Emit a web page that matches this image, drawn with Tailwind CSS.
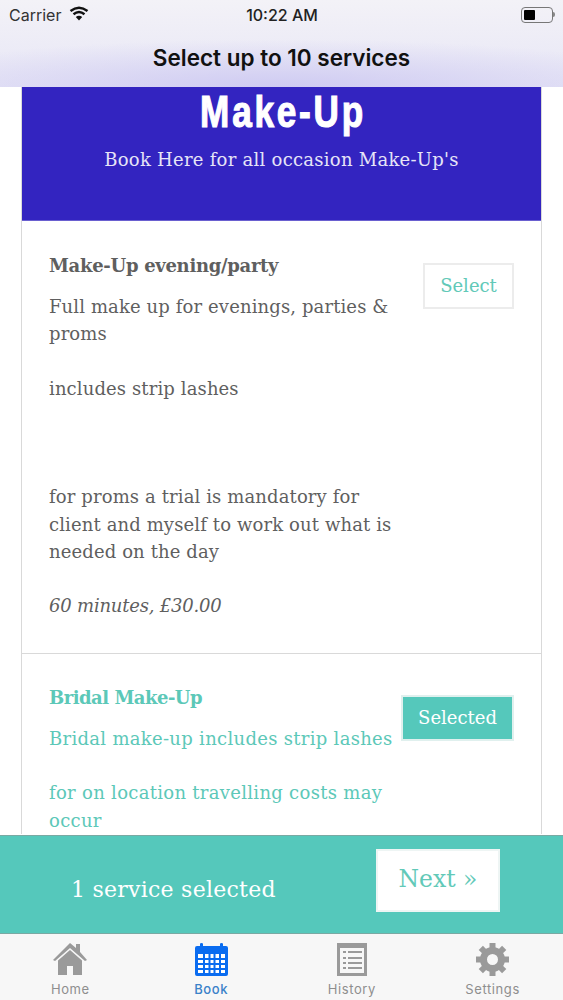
<!DOCTYPE html>
<html lang="en">

<head>
  <meta charset="UTF-8" />
  <meta name="viewport" content="width=device-width, initial-scale=1.0" />
  <title>Select services</title>
  <script src="https://cdn.jsdelivr.net/npm/@tailwindcss/browser@4"></script>
</head>

<body class="bg-white">
  <div class="flex flex-col h-[1000px] w-[563px] overflow-hidden font-['DejaVu_Serif',serif]">

    <!-- status bar + nav -->
    <header class="h-[87px] shrink-0 bg-[radial-gradient(ellipse_75%_55%_at_50%_100%,#cfcbf2,transparent),linear-gradient(#f3f2f7,#e7e6f6)] font-['Inter',sans-serif] text-[#111]">
      <div class="flex items-center justify-between h-[29px] pl-[9px] pr-[8px]">
        <div class="flex items-center w-[180px] gap-[8px]">
          <span class="text-[16px] text-[#333]">Carrier</span>
          <svg class="w-[20px] h-[15px] mb-[3px]" viewBox="0 0 20 15" fill="none" stroke="#111" stroke-width="2.4">
            <path d="M1.5 5 Q10 -1.5 18.5 5" />
            <path d="M4.5 8.2 Q10 3.8 15.5 8.2" />
            <path d="M10 14.5 L6.8 11 Q10 8.6 13.2 11 Z" fill="#111" stroke="none" />
          </svg>
        </div>
        <span class="text-[16px] font-medium text-[#222]">10:22 AM</span>
        <div class="flex justify-end items-center w-[180px]">
          <div class="w-[32px] h-[16px] rounded-[4px] border border-[#777] p-[2px]">
            <div class="w-[11px] h-full bg-black rounded-[1px]"></div>
          </div>
          <div class="w-[2px] h-[5px] bg-[#888] rounded-r-sm"></div>
        </div>
      </div>
      <h1 class="text-center text-[22.5px] leading-[58px] font-semibold h-[58px]">Select up to 10 services</h1>
    </header>

    <!-- service list -->
    <main class="flex-1 min-h-0 overflow-hidden px-[21px]">
      <div class="border-x border-[#d9d9d9]">
        <div class="h-[134px] bg-[#3324c0] text-center text-white border-b border-[#6a60d0]">
          <h2 class="font-['Liberation_Sans',sans-serif] font-bold text-[45px] leading-[50px] tracking-[3.6px] pl-[4px] scale-x-[0.78] [-webkit-text-stroke:1.2px_white]">Make-Up</h2>
          <p class="text-[18px] leading-[27px] mt-[9px] tracking-[0.26px] text-[#e6e4f7]">Book Here for all occasion Make-Up's</p>
        </div>

        <div class="flex justify-between pl-[27px] pr-[27px] pt-[31px] h-[433px] border-b border-[#d9d9d9] text-[#5f5f5f]">
          <div class="w-[350px] text-[18px] leading-[27.2px]">
            <h3 class="font-bold mb-[14px] leading-[27px] tracking-[-0.3px]">Make-Up evening/party</h3>
            <p class="tracking-[0.12px]">Full make up for evenings, parties &amp; proms<br /><br />includes strip lashes<br /><br /><br /><br />for proms a trial is mandatory for client and myself to work out what is needed on the day<br /><br /><em class="tracking-[-0.2px]">60 minutes, £30.00</em></p>
          </div>
          <button class="mt-[11px] w-[91px] h-[46px] pb-[2px] border-2 border-[#ececec] text-[#62c9b8] text-[18px]">Select</button>
        </div>

        <div class="flex justify-between pl-[27px] pr-[27px] pt-[30px] text-[#5cc8b8]">
          <div class="w-[350px] text-[18px] leading-[27.2px]">
            <h3 class="font-bold mb-[14px] leading-[27px] tracking-[-0.5px]">Bridal Make-Up</h3>
            <p class="tracking-[0.3px]">Bridal make-up includes strip lashes<br /><br />for on location travelling costs may occur</p>
          </div>
          <button class="mt-[11px] w-[113px] h-[46px] pb-[2px] border-2 border-[#e0f0ee] bg-[#55c8bb] text-white text-[18px]">Selected</button>
        </div>
      </div>
    </main>

    <!-- selected summary -->
    <div class="h-[99px] shrink-0 flex items-center justify-between bg-[#55c8bb] border-y border-[#7aa9a3] pl-[71px] pr-[63px]">
      <span class="text-white text-[22px] mt-[10px] tracking-[0.25px]">1 service selected</span>
      <button class="w-[124px] h-[63px] pb-[2px] bg-white border-2 border-[#eef5f4] text-[#62c9b8] text-[23.5px] mb-[8px]">Next »</button>
    </div>

    <!-- tab bar -->
    <nav class="h-[66px] shrink-0 grid grid-cols-4 bg-[#f7f7f7] font-['Inter',sans-serif] text-[13px] tracking-[0.6px] text-[#8e8e8e] text-center">
      <div class="flex flex-col items-center pt-[9px]">
        <svg class="w-[34px] h-[33px]" viewBox="0 0 34 33" fill="#9a9a9a">
          <path d="M17 0 L23 5 V1 H27 V9 L34 17 L32 18 L17 5 L2 18 L0 17 Z" />
          <path d="M17 7 L29 17.5 V32 H20 V23 H14 V32 H5 V17.5 Z" />
        </svg>
        <span class="mt-[4px]">Home</span>
      </div>
      <div class="flex flex-col items-center pt-[9px] text-[#3b82c9] font-medium">
        <svg class="w-[33px] h-[33px]" viewBox="0 0 33 33">
          <path fill="#0a6cf0" d="M2 3 H5 V1 Q5 0 6.5 0 T8 1 V3 H25 V1 Q25 0 26.5 0 T28 1 V3 H31 Q33 3 33 5 V31 Q33 33 31 33 H2 Q0 33 0 31 V5 Q0 3 2 3 Z" />
          <path fill="#fff" d="M3 11 H30 V30 H3 Z" />
          <path fill="#0a6cf0" d="M8 11 H10 V30 H8 Z M13.5 11 H15.5 V30 H13.5 Z M18.5 11 H20.5 V30 H18.5 Z M24 11 H26 V30 H24 Z M3 15 H30 V17 H3 Z M3 20 H30 V22 H3 Z M3 25 H30 V27 H3 Z" />
        </svg>
        <span class="mt-[4px]">Book</span>
      </div>
      <div class="flex flex-col items-center pt-[9px]">
        <svg class="w-[30px] h-[33px]" viewBox="0 0 30 33">
          <path fill="#9a9a9a" d="M0 0 H30 V33 H0 Z" />
          <path fill="#f7f7f7" d="M3 5 H27 V30 H3 Z" />
          <path fill="#9a9a9a" d="M6 8 H9 V10 H6 Z M11 8 H25 V10 H11 Z M6 14 H9 V16 H6 Z M11 14 H25 V16 H11 Z M6 19 H9 V21 H6 Z M11 19 H25 V21 H11 Z M6 24 H9 V26 H6 Z M11 24 H25 V26 H11 Z" />
        </svg>
        <span class="mt-[4px]">History</span>
      </div>
      <div class="flex flex-col items-center pt-[9px]">
        <svg class="w-[33px] h-[33px]" viewBox="0 0 33 33">
          <circle cx="16.5" cy="16.5" r="9" fill="none" stroke="#9a9a9a" stroke-width="7" />
          <g stroke="#9a9a9a" stroke-width="6">
            <path d="M16.5 0 V6" />
            <path d="M16.5 27 V33" />
            <path d="M0 16.5 H6" />
            <path d="M27 16.5 H33" />
            <path d="M4.8 4.8 L9 9" />
            <path d="M24 24 L28.2 28.2" />
            <path d="M4.8 28.2 L9 24" />
            <path d="M24 9 L28.2 4.8" />
          </g>
        </svg>
        <span class="mt-[4px]">Settings</span>
      </div>
    </nav>
  </div>
</body>

</html>
